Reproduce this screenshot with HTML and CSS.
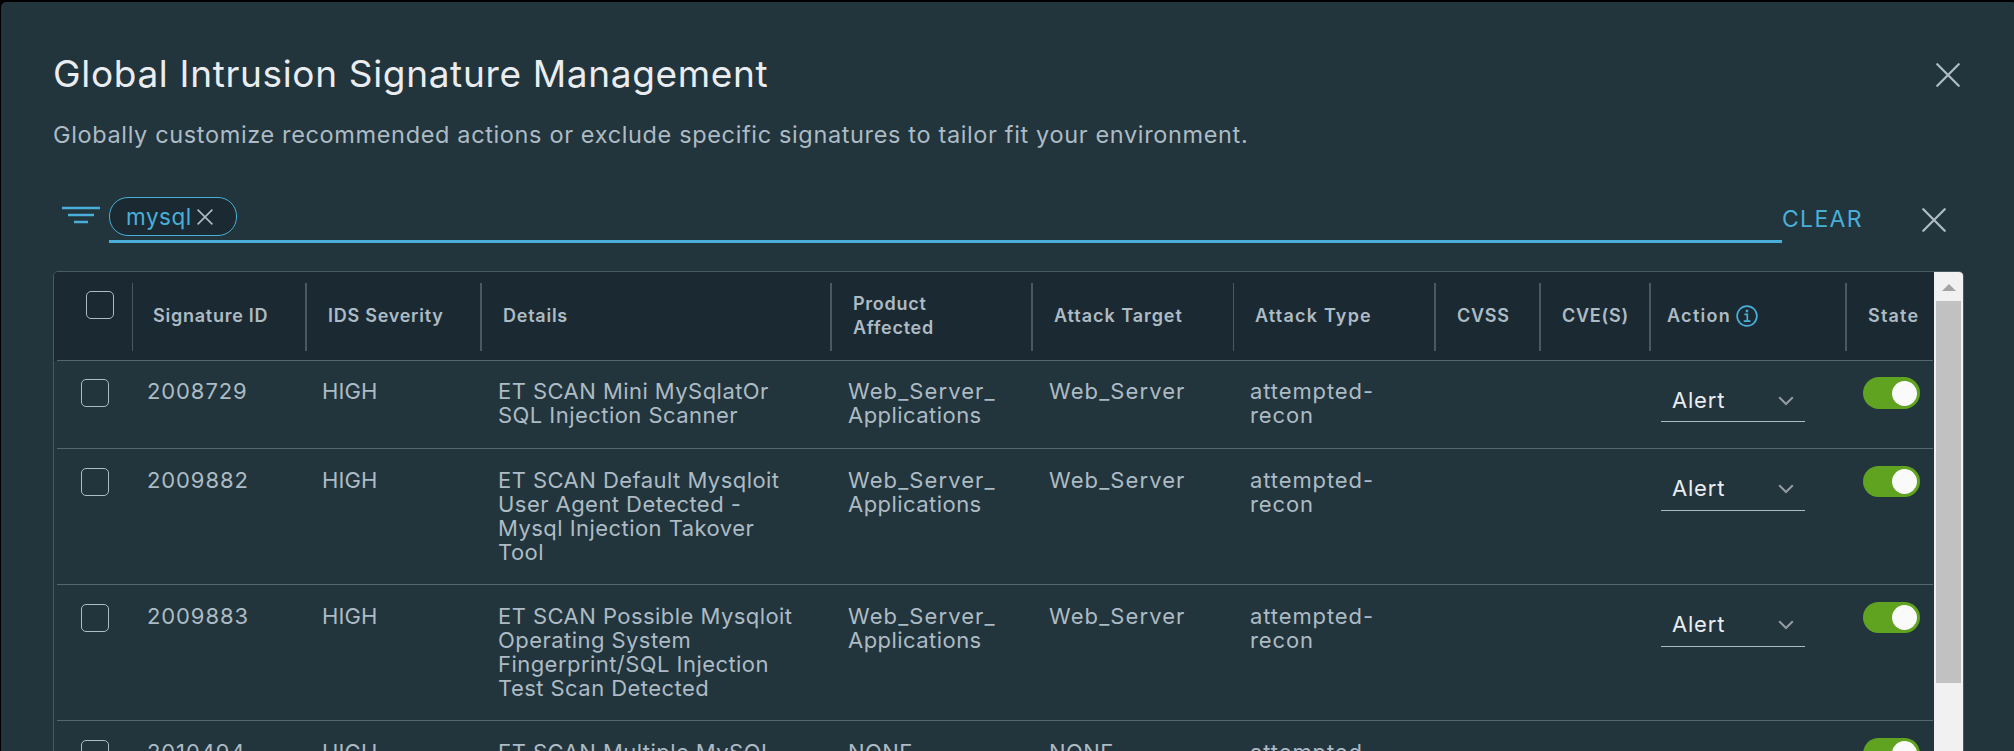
FILE: index.html
```html
<!DOCTYPE html>
<html lang="en">
<head>
<meta charset="utf-8">
<title>Global Intrusion Signature Management</title>
<link rel="stylesheet" href="styles.css">
</head>
<body>
<main class="modal">
  <header class="head">
    <h1 class="title">Global Intrusion Signature Management</h1>
    <svg class="close" viewBox="0 0 24 24"><path d="M1.3 1.3 22.7 22.7M22.7 1.3 1.3 22.7"/></svg>
  </header>
  <p class="subtitle">Globally customize recommended actions or exclude specific signatures to tailor fit your environment.</p>

  <div class="filter">
    <svg class="filter-icon" viewBox="0 0 38 18"><path d="M0 2H38M6 9H32M12 16H26"/></svg>
    <div class="field">
      <span class="chip">mysql<svg class="chip-x" viewBox="0 0 16 16"><path d="M.6.6 15.4 15.4M15.4.6.6 15.4"/></svg></span>
    </div>
    <span class="clear">CLEAR</span>
    <svg class="close filter-close" viewBox="0 0 24 24"><path d="M1.3 1.3 22.7 22.7M22.7 1.3 1.3 22.7"/></svg>
  </div>

  <div class="table">
    <div class="grid">
      <div class="row header">
        <div class="th th-check"><span class="box"></span></div>
        <div class="th th-id">Signature ID</div>
        <div class="th">IDS Severity</div>
        <div class="th">Details</div>
        <div class="th">Product<br>Affected</div>
        <div class="th thin">Attack Target</div>
        <div class="th th-type">Attack Type</div>
        <div class="th">CVSS</div>
        <div class="th">CVE(S)</div>
        <div class="th th-action">Action<svg class="info" viewBox="0 0 22 22"><circle cx="11" cy="11" r="9.9"/><path d="M8.4 9.3H11.3V16M7.7 16.2H14.5"/><path class="dot" d="M11 4.8V7.2"/></svg></div>
        <div class="th th-state">State</div>
      </div>
      <div class="row first">
        <div class="td td-check"><span class="box"></span></div>
        <div class="td td-id">2008729</div>
        <div class="td td-severity">HIGH</div>
        <div class="td">ET SCAN Mini MySqlatOr<br>SQL Injection Scanner</div>
        <div class="td"><span class="server">Web_Server_</span><br>Applications</div>
        <div class="td server">Web_Server</div>
        <div class="td td-type">attempted-<br>recon</div>
        <div class="td"></div>
        <div class="td"></div>
        <div class="td td-action"><div class="select">Alert<svg class="chev" viewBox="0 0 16 10"><path d="M1.2 1.2 8 8 14.8 1.2"/></svg></div></div>
        <div class="td td-state"><span class="toggle"></span></div>
      </div>
      <div class="row">
        <div class="td td-check"><span class="box"></span></div>
        <div class="td td-id">2009882</div>
        <div class="td td-severity">HIGH</div>
        <div class="td">ET SCAN Default Mysqloit<br>User Agent Detected -<br>Mysql Injection Takover<br>Tool</div>
        <div class="td"><span class="server">Web_Server_</span><br>Applications</div>
        <div class="td server">Web_Server</div>
        <div class="td td-type">attempted-<br>recon</div>
        <div class="td"></div>
        <div class="td"></div>
        <div class="td td-action"><div class="select">Alert<svg class="chev" viewBox="0 0 16 10"><path d="M1.2 1.2 8 8 14.8 1.2"/></svg></div></div>
        <div class="td td-state"><span class="toggle"></span></div>
      </div>
      <div class="row">
        <div class="td td-check"><span class="box"></span></div>
        <div class="td td-id">2009883</div>
        <div class="td td-severity">HIGH</div>
        <div class="td">ET SCAN Possible Mysqloit<br>Operating System<br>Fingerprint/SQL Injection<br>Test Scan Detected</div>
        <div class="td"><span class="server">Web_Server_</span><br>Applications</div>
        <div class="td server">Web_Server</div>
        <div class="td td-type">attempted-<br>recon</div>
        <div class="td"></div>
        <div class="td"></div>
        <div class="td td-action"><div class="select">Alert<svg class="chev" viewBox="0 0 16 10"><path d="M1.2 1.2 8 8 14.8 1.2"/></svg></div></div>
        <div class="td td-state"><span class="toggle"></span></div>
      </div>
      <div class="row">
        <div class="td td-check"><span class="box"></span></div>
        <div class="td td-id">2010494</div>
        <div class="td td-severity">HIGH</div>
        <div class="td">ET SCAN Multiple MySQL</div>
        <div class="td">NONE</div>
        <div class="td">NONE</div>
        <div class="td td-type">attempted-</div>
        <div class="td"></div>
        <div class="td"></div>
        <div class="td"></div>
        <div class="td td-state"><span class="toggle"></span></div>
      </div>
    </div>
    <div class="scrollbar">
      <svg class="arrow" viewBox="0 0 14 7"><path d="M0 7 7 0 14 7Z"/></svg>
      <div class="thumb"></div>
    </div>
  </div>
</main>
</body>
</html>
```
FILE: styles.css
```css
* { box-sizing: border-box; }

body {
  margin: 0;
  height: 751px;
  overflow: hidden;
  background: #000;
  padding: 2px 0 0 1px;
  font-family: Inter, "Open Sans", sans-serif;
  color: #adbbc4;
}

svg { display: block; flex: none; fill: none; }

.modal {
  height: 749px;
  overflow: hidden;
  padding: 50px 50px 0 52px;
  background: #22343c;
  border-radius: 5px 1px 0 0;
}

.head {
  display: flex;
  justify-content: space-between;
  height: 69px;
  padding-right: 4px;
}

.title {
  margin: 0;
  font-size: 37px;
  line-height: 44px;
  font-weight: 400;
  letter-spacing: .66px;
  color: #eaedf0;
}

.close {
  width: 24px;
  height: 24px;
  margin-top: 11px;
  stroke: #adbbc4;
  stroke-width: 2.3;
  stroke-linecap: round;
}

.subtitle {
  margin: 0;
  height: 76px;
  font-size: 23.5px;
  line-height: 28px;
  font-weight: 400;
  letter-spacing: .64px;
  white-space: nowrap;
}

.filter {
  display: flex;
  height: 74px;
  padding-left: 9px;
}

.filter-icon {
  width: 38px;
  height: 18px;
  margin: 9px 9px 0 0;
  stroke: #49afd9;
  stroke-width: 2.3;
}

.field {
  width: 1673px;
  height: 46px;
  border-bottom: 3px solid #49afd9;
}

.chip {
  display: flex;
  width: 128px;
  height: 39px;
  padding-left: 16px;
  border: 1px solid #49afd9;
  border-radius: 19px;
  background: #1b2a32;
  color: #49afd9;
  font-size: 22.5px;
  line-height: 37px;
  letter-spacing: .5px;
}

.chip-x {
  width: 16px;
  height: 16px;
  margin: 11px 0 0 5px;
  stroke: #adbbc4;
  stroke-width: 1.6;
}

.clear {
  width: 140px;
  font-size: 23px;
  line-height: 45px;
  font-weight: 400;
  letter-spacing: 1.3px;
  color: #49afd9;
}

.filter-close { margin-top: 11px; }

.table {
  display: flex;
  width: 1911px;
  height: 520px;
  border: 1px solid #495865;
  border-radius: 5px;
  overflow: hidden;
}

.grid { width: 1880px; }

.row {
  display: grid;
  grid-template-columns: 79px 174px 175px 350px 201px 201px 202px 105px 110px 196px 87px;
  height: 136px;
  background: linear-gradient(#566571, #566571) 3px 100% / 1876px 1px no-repeat;
}

.header {
  height: 89px;
  background-color: #1b2a32;
}

.first { height: 88px; }
.first .td { margin-top: -1px; }

.th {
  display: flex;
  align-items: center;
  height: 68px;
  margin-top: 11px;
  padding: 0 0 2px 21px;
  border-right: 2px solid #495865;
  font-size: 18px;
  line-height: 24px;
  font-weight: 600;
  letter-spacing: .75px;
  white-space: nowrap;
}

.th:last-child { border-right: 0; }
.thin, .th-check { border-right-width: 1px; }
.thin { letter-spacing: .95px; }
.th-type, .th-state { letter-spacing: 1.2px; }
.th-id { padding-left: 20px; }

.th-check {
  align-items: flex-start;
  padding: 8px 0 0 32px;
}

.box {
  width: 28px;
  height: 28px;
  border: 1px solid #adbbc4;
  border-radius: 5px;
}

.th-action { padding-left: 16px; letter-spacing: 1.3px; }

.info {
  width: 22px;
  height: 22px;
  margin-left: 5px;
  stroke: #49afd9;
  stroke-width: 1.7;
}

.info .dot { stroke-width: 2.4; }

.td {
  padding: 19px 0 0 16px;
  font-size: 22px;
  line-height: 24px;
  font-weight: 400;
  letter-spacing: .45px;
  white-space: nowrap;
}

.td-id { padding-left: 14px; letter-spacing: .9px; }
.td-severity { padding-left: 15px; letter-spacing: .1px; }
.td-type { letter-spacing: .9px; }
.server { letter-spacing: 1.1px; }

.td-check {
  display: flex;
  padding: 19px 0 0 27px;
}

.td-action { padding: 18px 0 0 10px; }

.select {
  display: flex;
  justify-content: space-between;
  width: 144px;
  height: 44px;
  padding: 0 11px;
  border-bottom: 1px solid #adbbc4;
  color: #eaedf0;
  line-height: 42px;
  letter-spacing: .8px;
}

.first .select { line-height: 44px; }

.chev {
  width: 16px;
  height: 10px;
  margin-top: 17px;
  stroke: #949ca1;
  stroke-width: 2;
}

.first .chev { margin-top: 18px; }

.td-state { padding: 17px 0 0 16px; }

.toggle {
  display: flex;
  justify-content: flex-end;
  width: 57px;
  height: 31px;
  padding: 3px;
  border-radius: 16px;
  background: #60a320;
}

.toggle::after {
  content: "";
  width: 25px;
  height: 25px;
  border-radius: 50%;
  background: #fafafa;
}

.first .toggle { height: 32px; padding-top: 4px; }

.scrollbar {
  width: 29px;
  background: #f1f1f1;
}

.arrow {
  width: 14px;
  height: 7px;
  margin: 12px 0 10px 8px;
  fill: #a3a3a3;
}

.thumb {
  width: 25px;
  height: 382px;
  margin-left: 2px;
  background: #c1c1c1;
}
```
